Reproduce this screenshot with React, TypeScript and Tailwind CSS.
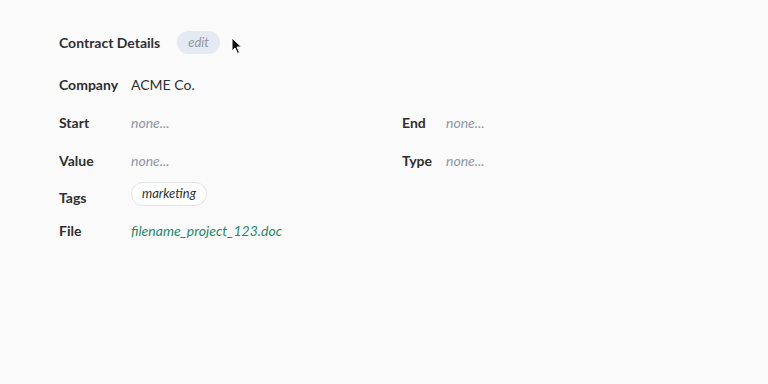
import React from 'react'

const Label = ({ text, w }: { text: string; w: string }) => (
  <div className={`${w} shrink-0 text-[14px] font-bold text-[#2d2f33]`}>{text}</div>
)

const None = () => <span className="text-[14px] italic text-[#8e97a8]">none...</span>

export default function App() {
  return (
    <div className="relative h-[384px] w-[768px] bg-[#fafafa] pl-[59px] pt-[31px] font-['Lato',sans-serif]">
      <div className="flex items-center gap-[17px]">
        <div className="text-[14px] font-bold text-[#2d2f33]">Contract Details</div>
        <div className="flex h-[23px] items-center rounded-full bg-[#e4e9f2] px-[11px] text-[13px] italic text-[#8e97a8]">edit</div>
      </div>
      <svg className="absolute left-[231px] top-[37px]" width="13" height="18" viewBox="0 0 13 18">
        <path d="M1 1 L1 14 L4 11 L6.5 16.5 L8.5 15.5 L6 10 L10.5 10 Z" fill="#111" stroke="#fff" strokeWidth="1" />
      </svg>
      <div className="mt-[20px] flex h-[20px] items-center">
        <Label text="Company" w="w-[72px]" />
        <span className="text-[14px] text-[#2d2f33]">ACME Co.</span>
      </div>
      <div className="mt-[18px] flex h-[20px] items-center">
        <div className="flex w-[343px] items-center">
          <Label text="Start" w="w-[72px]" />
          <None />
        </div>
        <div className="flex items-center">
          <Label text="End" w="w-[44px]" />
          <None />
        </div>
      </div>
      <div className="mt-[18px] flex h-[20px] items-center">
        <div className="flex w-[343px] items-center">
          <Label text="Value" w="w-[72px]" />
          <None />
        </div>
        <div className="flex items-center">
          <Label text="Type" w="w-[44px]" />
          <None />
        </div>
      </div>
      <div className="mt-[12px] flex">
        <div className="w-[72px] shrink-0 pt-[5px] text-[14px] font-bold text-[#2d2f33]">Tags</div>
        <div className="flex h-[24px] items-center rounded-full border border-[#dfe3ea] bg-white px-[10px] text-[13px] italic text-[#2d2f33]">marketing</div>
      </div>
      <div className="mt-[12px] flex h-[20px] items-center">
        <Label text="File" w="w-[72px]" />
        <span className="text-[14px] italic text-[#1f8a66]">filename_project_123.doc</span>
      </div>
    </div>
  )
}
